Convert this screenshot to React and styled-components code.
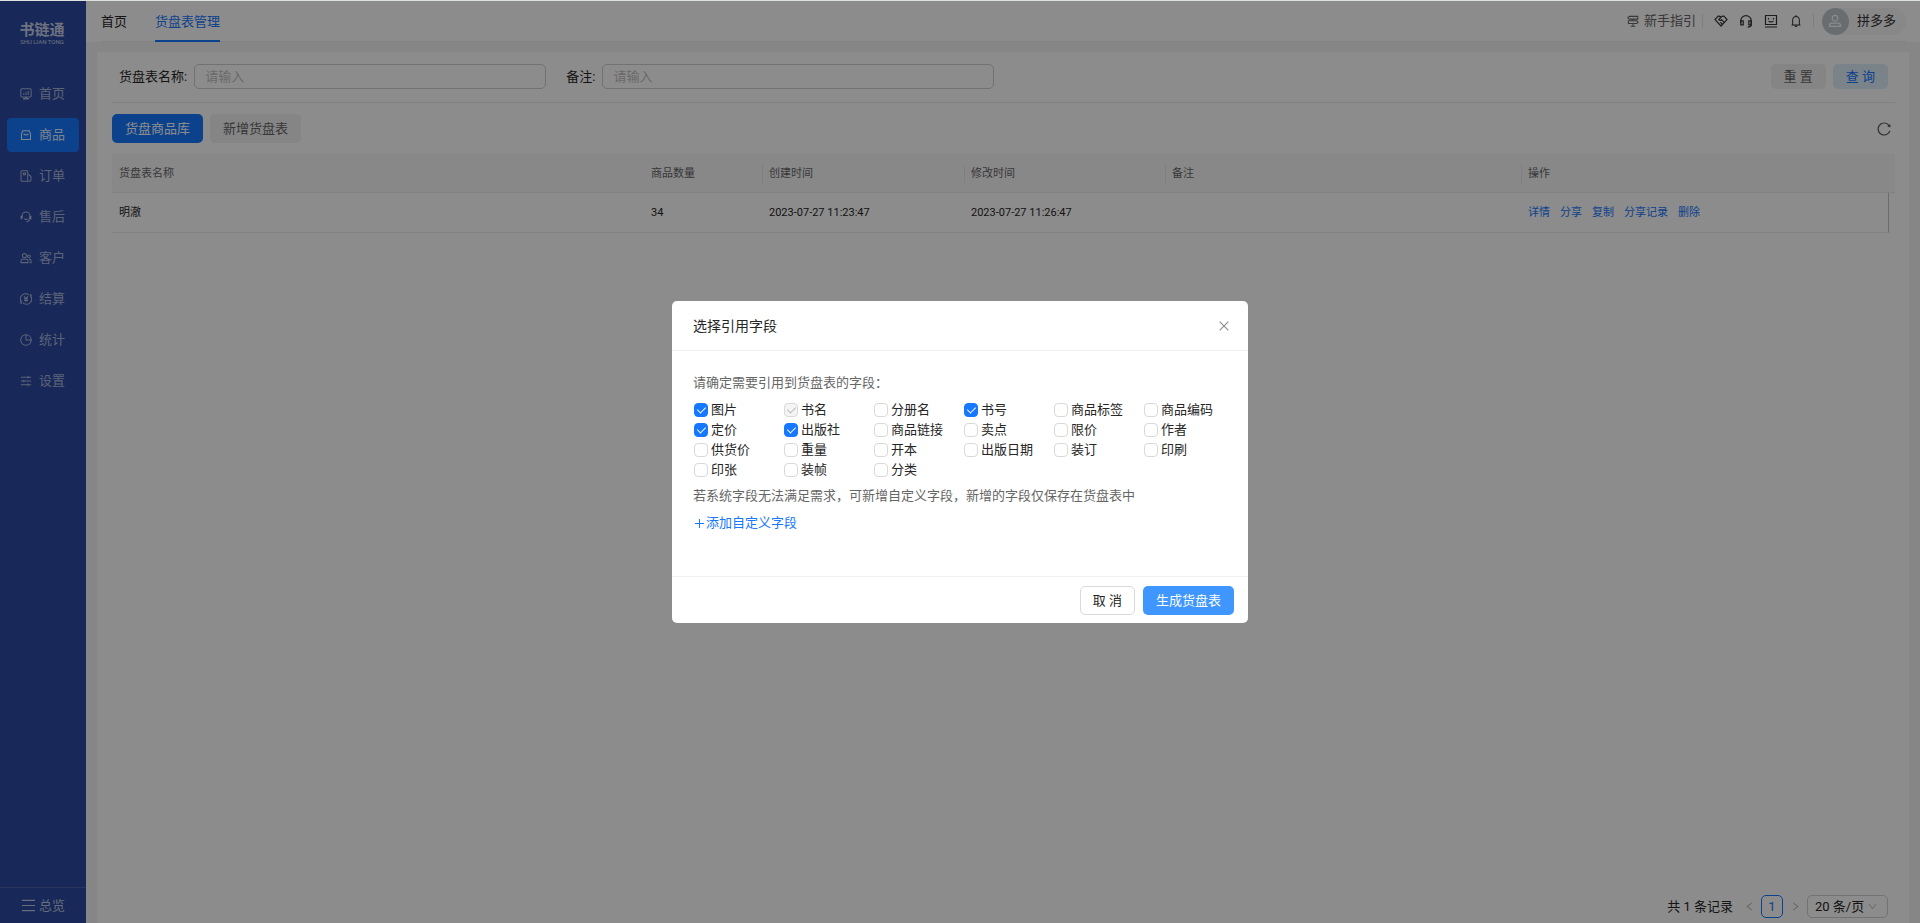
import { useState } from 'react'
import styled, { createGlobalStyle } from 'styled-components'
import {
  AiOutlineBell,
  AiOutlineClose,
  AiOutlineDown,
  AiOutlineLeft,
  AiOutlinePlus,
  AiOutlineReload,
  AiOutlineRight,
} from 'react-icons/ai'

const GlobalStyle = createGlobalStyle`
  *,
  *::before,
  *::after {
    box-sizing: border-box;
  }

  body {
    margin: 0;
    color: #262626;
    font-family: Roboto, 'Noto Sans CJK SC', sans-serif;
    font-size: 13px;
    line-height: 20px;
  }

  button,
  input,
  select {
    font: inherit;
    color: inherit;
  }

  a {
    color: #1677ff;
    text-decoration: none;
  }
`

const Page = styled.div`
  display: flex;
  min-height: 100vh;
  border-top: 1px solid #dde1df;
  background: #f5f5f6;
`

const Sidebar = styled.aside`
  display: flex;
  flex-direction: column;
  flex: none;
  width: 86px;
  background: #2a49a2;
  color: #ffffff99;
`

const Logo = styled.div`
  display: flex;
  flex-direction: column;
  align-items: center;
  padding: 20px 2px 32px 0;
  color: #ffffffc0;
  font-size: 15px;
  font-weight: 700;
  line-height: 18px;
`

const LogoCaption = styled.span`
  font-size: 6px;
  font-weight: 400;
  line-height: 6px;
`

const Nav = styled.nav`
  display: flex;
  flex-direction: column;
  gap: 7px;
  padding: 0 7px;
`

const NavItem = styled.a`
  display: flex;
  align-items: center;
  gap: 7px;
  height: 34px;
  padding-left: 13px;
  border-radius: 4px;
  background: ${({ $active }) => ($active ? '#1677ff' : 'transparent')};
  color: ${({ $active }) => ($active ? '#ffffffe6' : '#ffffff99')};
`

const Overview = styled.a`
  display: flex;
  align-items: center;
  gap: 4px;
  height: 36px;
  margin-top: auto;
  padding-left: 22px;
  border-top: 1px solid #4a63b0;
  color: #ffffffb0;
`

const Main = styled.div`
  display: flex;
  flex: 1;
  flex-direction: column;
  min-width: 0;
`

const Header = styled.header`
  padding: 0 14px 0 15px;
  background: #fff;
`

const HeaderInner = styled.div`
  display: flex;
  justify-content: space-between;
  height: 41px;
  border-bottom: 1px solid #ebebeb;
`

const Tabs = styled.nav`
  display: flex;
  gap: 28px;
`

const Tab = styled.a`
  height: 41px;
  border-bottom: 2px solid ${({ $active }) => ($active ? '#1677ff' : 'transparent')};
  color: ${({ $active }) => ($active ? '#1677ff' : '#262626')};
  line-height: 42px;
`

const Tools = styled.div`
  display: flex;
  align-items: center;
  color: #333;
`

const Guide = styled.a`
  display: flex;
  align-items: center;
  gap: 5px;
  color: #666;
`

const ToolGroup = styled.div`
  display: flex;
  gap: 11px;
  margin: 0 8px 0 6px;
  padding: 0 10px 0 11px;
  border: solid #e3e3e3;
  border-width: 0 1px;
`

const IconButton = styled.button`
  display: grid;
  place-items: center;
  width: ${({ $size = 14 }) => $size}px;
  height: ${({ $size = 14 }) => $size}px;
  padding: 0;
  border: 0;
  background: none;
  color: ${({ $color = 'inherit' }) => $color};
  cursor: pointer;
`

const Account = styled.a`
  display: flex;
  align-items: center;
  gap: 8px;
  padding-right: 10px;
  border-radius: 14px;
  background: #f7f7f7;
  color: #333;
`

const Avatar = styled.span`
  display: grid;
  place-items: center;
  width: 27px;
  height: 27px;
  border-radius: 50%;
  background: #bfc6cd;
  color: #fff;
`

const Card = styled.main`
  display: flex;
  flex: 1;
  flex-direction: column;
  margin: 10px 11px 0;
  padding: 0 14px 5px 15px;
  background: #fff;
`

const Filters = styled.form`
  display: grid;
  grid-template-columns: repeat(4, 1fr);
  gap: 20px;
  padding: 12px 7px 13px;
  border-bottom: 1px solid #ebebeb;
`

const Field = styled.label`
  display: flex;
  align-items: center;
  gap: 7px;
  white-space: nowrap;
`

const TextInput = styled.input`
  flex: 1;
  min-width: 0;
  height: 25px;
  padding: 0 10px;
  border: 1px solid #d0d0d0;
  border-radius: 5px;
  background: #fff;

  &::placeholder {
    color: #bfbfbf;
  }
`

const FilterActions = styled.div`
  display: flex;
  grid-column: 4;
  justify-content: flex-end;
  gap: 7px;
`

const tones = {
  primary: 'background: #1677ff; color: #fff;',
  hover: 'background: #4096ff; color: #fff;',
  muted: 'background: #f2f2f4; color: #666;',
  soft: 'background: #e0eefc; color: #1677ff;',
  plain: 'background: #fff; border-color: #d9d9d9;',
}

const Button = styled.button`
  height: ${({ $small }) => ($small ? 25 : 29)}px;
  padding: 0 12px;
  border: 1px solid transparent;
  border-radius: 5px;
  line-height: 20px;
  white-space: nowrap;
  cursor: pointer;
  ${({ $tone }) => tones[$tone]}
`

const Toolbar = styled.div`
  display: flex;
  align-items: center;
  gap: 7px;
  padding: 11px 3px 11px 0;
`

const Spacer = styled.span`
  flex: 1;
`

const Table = styled.table`
  width: 100%;
  border-spacing: 0;
  table-layout: fixed;
  font-size: 11px;
  line-height: 18px;
`

const Th = styled.th`
  height: 39px;
  padding: 1px 0 0;
  border-bottom: 1px solid #ebebeb;
  background: #f8f8f9;
  color: #666;
  font-weight: 400;
  text-align: left;
`

const ThLabel = styled.div`
  padding-left: 6px;
  border-left: 1px solid ${({ $divided }) => ($divided ? '#e8e8e8' : 'transparent')};
`

const Td = styled.td`
  height: 40px;
  padding: 0 7px;
  border-bottom: 1px solid #ebebeb;
`

const ActionsTd = styled(Td)`
  border-right: 1px solid #c4c4c4;
`

const RowActions = styled.div`
  display: flex;
  gap: 10px;
`

const Pagination = styled.div`
  display: flex;
  align-items: center;
  justify-content: flex-end;
  gap: 6px;
  margin-top: auto;
  padding-right: 7px;
`

const Total = styled.span`
  margin-right: 4px;
`

const PageNumber = styled.button`
  width: 22px;
  height: 23px;
  padding: 0;
  border: 1px solid #1677ff;
  border-radius: 5px;
  background: #fff;
  color: #1677ff;
`

const SizePicker = styled.label`
  display: flex;
  align-items: center;
  width: 81px;
  height: 23px;
  padding: 0 9px 0 7px;
  border: 1px solid #d0d0d0;
  border-radius: 5px;
  color: #bfbfbf;
`

const SizeSelect = styled.select`
  flex: 1;
  padding: 0;
  border: 0;
  appearance: none;
  background: none;
  color: #262626;
`

const Mask = styled.div`
  position: fixed;
  inset: 1px 0 0;
  display: grid;
  place-items: center;
  background: rgba(0, 0, 0, 0.45);
`

const Dialog = styled.section`
  width: 576px;
  border-radius: 5px;
  background: #fff;
`

const DialogHeader = styled.header`
  display: flex;
  align-items: center;
  justify-content: space-between;
  height: 50px;
  padding: 0 17px 0 21px;
  border-bottom: 1px solid #f0f0f0;
`

const DialogTitle = styled.h2`
  margin: 0;
  font-size: 14px;
  font-weight: 400;
`

const DialogBody = styled.div`
  padding: 22px 14px 43px 21px;
`

const Hint = styled.p`
  margin: 0;
  color: #666;
`

const FieldGrid = styled.div`
  display: grid;
  grid-template-columns: repeat(6, 90px);
  padding: 7px 0 6px 1px;
`

const Option = styled.label`
  display: flex;
  align-items: center;
  gap: 3px;
  white-space: nowrap;
`

const Checkbox = styled.input`
  display: grid;
  place-items: center;
  width: 14px;
  height: 14px;
  margin: 0;
  border: 1px solid #d9d9d9;
  border-radius: 4px;
  appearance: none;
  background: #fff;

  &:checked {
    border-color: #1677ff;
    background: #1677ff;
  }

  &:checked::after {
    width: 5px;
    height: 8px;
    margin-bottom: 2px;
    border: solid #fff;
    border-width: 0 1px 1px 0;
    content: '';
    rotate: 45deg;
  }

  &:disabled {
    border-color: #d9d9d9;
    background: #f5f5f5;
  }

  &:disabled::after {
    border-color: #b8b8b8;
  }
`

const AddField = styled.a`
  display: flex;
  align-items: center;
  width: fit-content;
  margin-top: 7px;
`

const DialogFooter = styled.footer`
  display: flex;
  justify-content: flex-end;
  gap: 8px;
  padding: 9px 14px 8px;
  border-top: 1px solid #f0f0f0;
`

const Glyph = ({ size = 12, children }) => (
  <svg
    width={size}
    height={size}
    viewBox="0 0 14 14"
    fill="none"
    stroke="currentColor"
    strokeWidth="1.2"
    aria-hidden="true"
  >
    {children}
  </svg>
)

const navItems = [
  {
    label: '首页',
    icon: (
      <>
        <rect x="1" y="1" width="12" height="9.5" rx="1.2" />
        <path d="M4.4 8.2V6M7 8.2V5M9.6 8.2V3.4" />
        <path d="M7 10.5v2M3.6 12.6h6.8" strokeWidth="1.8" />
      </>
    ),
  },
  {
    label: '商品',
    active: true,
    icon: (
      <>
        <path d="M3.2 2h7.6l1.5 4v6.2H1.7V6z" />
        <path d="M4.2 5.6q2.8 3 5.6 0" />
      </>
    ),
  },
  {
    label: '订单',
    icon: (
      <>
        <path d="M9 13H2.2q-1 0-1-1V2q0-1 1-1H8q1 0 1 1zM9 5.6h1.6l2.2 2V12q0 1-1 1H9" />
        <path d="M4 3.4h2.4v2.2H4z" />
      </>
    ),
  },
  {
    label: '售后',
    icon: (
      <>
        <path d="M2.4 8V5.8a4.6 4.6 0 0 1 9.2 0V8c0 2.5-1.6 4.2-4 4.8" />
        <path d="M1.7 5.5v4M12.3 5.5v4" strokeWidth="2" />
        <path d="M5 9q2 1.5 4 0" />
      </>
    ),
  },
  {
    label: '客户',
    icon: (
      <>
        <circle cx="5.2" cy="4.2" r="2.4" />
        <path d="M1.2 12.4V10q0-1.6 1.6-1.6h4.8q1.6 0 1.6 1.6v2.4z" />
        <circle cx="10.4" cy="5" r="1.6" />
        <path d="M10.6 8.6h1q1.2 0 1.2 1.4v2.4h-1.6" />
      </>
    ),
  },
  {
    label: '结算',
    icon: (
      <>
        <path d="M2.4 11.6A6 6 0 0 1 10.6 2.4M11.6 2.4A6 6 0 0 1 3.4 11.6M1.2 8.2v4.6M12.8 1.2v4.6" />
        <path d="m4.8 4 2.2 2.6L9.2 4M4.8 6.8h4.4M4.8 8.6h4.4M7 6.6v4" />
      </>
    ),
  },
  {
    label: '统计',
    icon: (
      <>
        <circle cx="7" cy="7" r="6.2" />
        <path d="M7 1v6h6" />
      </>
    ),
  },
  {
    label: '设置',
    icon: <path d="M1 2.5h12M1 7h12M1 11.5h12M9.5 1v3M4.5 5.5v3M9.5 10v3" />,
  },
]

const columns = [
  { title: '货盘表名称' },
  { title: '商品数量', width: 118 },
  { title: '创建时间', width: 202, divided: true },
  { title: '修改时间', width: 201, divided: true },
  { title: '备注', width: 356, divided: true },
  { title: '操作', width: 368, divided: true },
]

const rows = [
  {
    name: '明澈',
    count: 34,
    created: '2023-07-27 11:23:47',
    updated: '2023-07-27 11:26:47',
    remark: '',
  },
]

const rowActions = ['详情', '分享', '复制', '分享记录', '删除']

const fields = [
  '图片', '书名', '分册名', '书号', '商品标签', '商品编码',
  '定价', '出版社', '商品链接', '卖点', '限价', '作者',
  '供货价', '重量', '开本', '出版日期', '装订', '印刷',
  '印张', '装帧', '分类',
]

const requiredField = '书名'

function SideMenu() {
  return (
    <Sidebar>
      <Logo>
        书链通
        <LogoCaption>SHU LIAN TONG</LogoCaption>
      </Logo>

      <Nav>
        {navItems.map(({ label, icon, active }) => (
          <NavItem key={label} href="#" $active={active}>
            <Glyph>{icon}</Glyph>
            {label}
          </NavItem>
        ))}
      </Nav>

      <Overview href="#">
        <Glyph size={13}>
          <path d="M0 1.5h14M0 7h14M0 12.5h14" />
        </Glyph>
        总览
      </Overview>
    </Sidebar>
  )
}

function TopBar() {
  return (
    <Header>
      <HeaderInner>
        <Tabs>
          <Tab href="#">首页</Tab>
          <Tab href="#" $active>
            货盘表管理
          </Tab>
        </Tabs>

        <Tools>
          <Guide href="#">
            <Glyph>
              <path d="M2.6 1.6h10v3.2h-10L1 3.2zM1.6 6.8h9.8L13 8.4 11.4 10H1.6zM7 4.8v2M7 10v3M4.4 13h5.2" />
            </Glyph>
            新手指引
          </Guide>

          <ToolGroup>
            <IconButton type="button" aria-label="合作">
              <Glyph size={14}>
                <path d="M4 2.2q1.6-.4 3 1 1.4-1.4 3-1l3 3.4L7 12 1 5.6z" />
                <path d="M7 3.2 4.8 5.6q1.2 1.4 2.6 0l3.2 3M6.4 8.2l2 2.2" />
              </Glyph>
            </IconButton>
            <IconButton type="button" aria-label="客服">
              <Glyph size={14}>
                <path d="M1.8 9V6.8a5.2 5.2 0 0 1 10.4 0V11q0 2-3.7 2" />
                <path d="M1.8 6.8h2.4v4H1.8zM9.8 6.8h2.4v4H9.8z" />
              </Glyph>
            </IconButton>
            <IconButton type="button" aria-label="反馈">
              <Glyph size={14}>
                <path d="M1.5 1.5h11v9h-11zM1 13h12M4.5 4v1.6M9.5 4v1.6M4.5 7.2q2.5 1.4 5 0" />
              </Glyph>
            </IconButton>
            <IconButton type="button" aria-label="通知">
              <AiOutlineBell size={14} />
            </IconButton>
          </ToolGroup>

          <Account href="#">
            <Avatar>
              <Glyph size={14}>
                <circle cx="7" cy="4.2" r="2.8" />
                <path d="M1.6 12.4v-1q0-2.2 2.2-2.2h6.4q2.2 0 2.2 2.2v1z" />
              </Glyph>
            </Avatar>
            拼多多
          </Account>
        </Tools>
      </HeaderInner>
    </Header>
  )
}

function PalletTable() {
  return (
    <Table>
      <colgroup>
        {columns.map(({ title, width }) => (
          <col key={title} width={width} />
        ))}
        <col width={6} />
      </colgroup>
      <thead>
        <tr>
          {columns.map(({ title, divided }) => (
            <Th key={title} scope="col">
              <ThLabel $divided={divided}>{title}</ThLabel>
            </Th>
          ))}
          <Th as="td" />
        </tr>
      </thead>
      <tbody>
        {rows.map((row) => (
          <tr key={row.name}>
            <Td>{row.name}</Td>
            <Td>{row.count}</Td>
            <Td>{row.created}</Td>
            <Td>{row.updated}</Td>
            <Td>{row.remark}</Td>
            <ActionsTd>
              <RowActions>
                {rowActions.map((action) => (
                  <a key={action} href="#">
                    {action}
                  </a>
                ))}
              </RowActions>
            </ActionsTd>
          </tr>
        ))}
      </tbody>
    </Table>
  )
}

function FieldDialog({ onClose }) {
  const [selected, setSelected] = useState(['图片', '书名', '书号', '定价', '出版社'])

  const toggle = (field) =>
    setSelected((prev) =>
      prev.includes(field) ? prev.filter((f) => f !== field) : [...prev, field]
    )

  return (
    <Mask>
      <Dialog role="dialog" aria-modal="true" aria-labelledby="field-dialog-title">
        <DialogHeader>
          <DialogTitle id="field-dialog-title">选择引用字段</DialogTitle>
          <IconButton type="button" aria-label="关闭" $color="#8c8c8c" onClick={onClose}>
            <AiOutlineClose size={14} />
          </IconButton>
        </DialogHeader>

        <DialogBody>
          <Hint>请确定需要引用到货盘表的字段：</Hint>

          <FieldGrid>
            {fields.map((field) => (
              <Option key={field}>
                <Checkbox
                  type="checkbox"
                  checked={selected.includes(field)}
                  disabled={field === requiredField}
                  onChange={() => toggle(field)}
                />
                {field}
              </Option>
            ))}
          </FieldGrid>

          <Hint>若系统字段无法满足需求，可新增自定义字段，新增的字段仅保存在货盘表中</Hint>

          <AddField href="#">
            <AiOutlinePlus size={13} />
            添加自定义字段
          </AddField>
        </DialogBody>

        <DialogFooter>
          <Button type="button" $tone="plain" onClick={onClose}>
            取 消
          </Button>
          <Button type="button" $tone="hover">
            生成货盘表
          </Button>
        </DialogFooter>
      </Dialog>
    </Mask>
  )
}

export default function App() {
  const [open, setOpen] = useState(true)

  return (
    <>
      <GlobalStyle />
      <Page>
        <SideMenu />

        <Main>
          <TopBar />

          <Card>
            <Filters>
              <Field>
                货盘表名称:
                <TextInput placeholder="请输入" />
              </Field>
              <Field>
                备注:
                <TextInput placeholder="请输入" />
              </Field>
              <FilterActions>
                <Button type="reset" $tone="muted" $small>
                  重 置
                </Button>
                <Button type="button" $tone="soft" $small>
                  查 询
                </Button>
              </FilterActions>
            </Filters>

            <Toolbar>
              <Button type="button" $tone="primary" onClick={() => setOpen(true)}>
                货盘商品库
              </Button>
              <Button type="button" $tone="muted">
                新增货盘表
              </Button>
              <Spacer />
              <IconButton type="button" aria-label="刷新" $size={16} $color="#555">
                <AiOutlineReload size={16} />
              </IconButton>
            </Toolbar>

            <PalletTable />

            <Pagination>
              <Total>共 1 条记录</Total>
              <IconButton type="button" aria-label="上一页" $size={12} $color="#b0b0b0">
                <AiOutlineLeft size={11} />
              </IconButton>
              <PageNumber type="button">1</PageNumber>
              <IconButton type="button" aria-label="下一页" $size={12} $color="#b0b0b0">
                <AiOutlineRight size={11} />
              </IconButton>
              <SizePicker>
                <SizeSelect aria-label="每页条数" defaultValue="20">
                  <option value="10">10 条/页</option>
                  <option value="20">20 条/页</option>
                  <option value="50">50 条/页</option>
                </SizeSelect>
                <AiOutlineDown size={11} />
              </SizePicker>
            </Pagination>
          </Card>
        </Main>
      </Page>
      {open && <FieldDialog onClose={() => setOpen(false)} />}
    </>
  )
}
